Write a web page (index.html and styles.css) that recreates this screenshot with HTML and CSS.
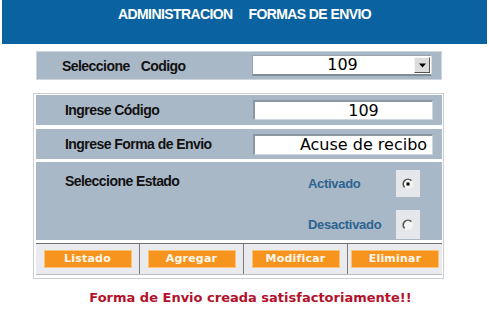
FILE: index.html
```html
<!DOCTYPE html>
<html lang="es">
<head>
<meta charset="utf-8">
<title>Administracion Formas de Envio</title>
<link rel="stylesheet" href="styles.css">
</head>
<body>
<header class="title">
  <span>ADMINISTRACION</span>
  <span>FORMAS DE ENVIO</span>
</header>

<section class="pick">
  <div class="lbl pick-lbl"><span>Seleccione</span><span>Codigo</span></div>
  <div class="select">
    <span class="select-val">109</span>
    <span class="select-btn">
      <svg width="9" height="5" viewBox="0 0 9 5"><path d="M1 0.5h7L4.5 4.5z" fill="#000"/></svg>
    </span>
  </div>
</section>

<section class="form">
  <div class="row">
    <div class="lbl row-lbl">Ingrese Código</div>
    <div class="input">109</div>
  </div>
  <div class="row row-2">
    <div class="lbl row-lbl">Ingrese Forma de Envio</div>
    <div class="input input-2">Acuse de recibo</div>
  </div>
  <div class="row row-estado">
    <div class="lbl estado-lbl">Seleccione Estado</div>
    <div class="radios">
      <span class="opt">Activado</span>
      <span class="radio-box">
        <svg width="12" height="12" viewBox="0 0 12 12"><circle cx="6" cy="6" r="5" fill="#f4f4f4"/><path d="M2.6 9.4A4.8 4.8 0 0 1 9.4 2.6" fill="none" stroke="#555" stroke-width="1.6"/><rect x="4.5" y="4.5" width="3" height="3" fill="#000"/></svg>
      </span>
      <span class="opt">Desactivado</span>
      <span class="radio-box">
        <svg width="12" height="12" viewBox="0 0 12 12"><circle cx="6" cy="6" r="5" fill="#f4f4f4"/><path d="M2.6 9.4A4.8 4.8 0 0 1 9.4 2.6" fill="none" stroke="#555" stroke-width="1.6"/></svg>
      </span>
    </div>
  </div>
  <div class="buttons">
    <div class="cell"><span class="btn">Listado</span></div>
    <div class="cell"><span class="btn">Agregar</span></div>
    <div class="cell"><span class="btn">Modificar</span></div>
    <div class="cell"><span class="btn">Eliminar</span></div>
  </div>
</section>

<p class="msg">Forma de Envio creada satisfactoriamente!!</p>
</body>
</html>
```
FILE: styles.css
```css
body {
  margin: 0;
  width: 489px;
  background: #ffffff;
  font-family: "Liberation Sans", Arial, sans-serif;
}

.title {
  margin: 0 2px;
  height: 44px;
  box-sizing: border-box;
  padding-top: 6px;
  background: #0a63a0;
  color: #ffffff;
  font-weight: bold;
  font-size: 14px;
  line-height: 16px;
  letter-spacing: -0.6px;
  display: flex;
  justify-content: center;
  gap: 16px;
}

.lbl {
  font-weight: bold;
  font-size: 14px;
  letter-spacing: -0.55px;
  color: #111;
  line-height: 16px;
}

.pick {
  margin: 7px 0 0 36px;
  width: 406px;
  height: 29px;
  box-sizing: border-box;
  background: #a9b8c7;
  border: 1px solid #cfd6dd;
  display: flex;
  align-items: center;
}

.pick-lbl {
  width: 215px;
  box-sizing: border-box;
  padding-left: 25px;
  display: flex;
  gap: 11px;
}

.select {
  width: 180px;
  height: 21px;
  box-sizing: border-box;
  background: #fff;
  border-top: 1px solid #9aa4ae;
  border-left: 1px solid #9aa4ae;
  border-right: 1px solid #d9dee3;
  border-bottom: 2px solid #7f8b97;
  display: flex;
  align-items: center;
}

.select-val {
  flex: 1;
  text-align: center;
  padding-left: 18px;
  font-family: "DejaVu Sans", sans-serif;
  font-size: 16px;
  line-height: 18px;
  color: #000;
}

.select-btn {
  width: 16px;
  height: 16px;
  box-sizing: border-box;
  margin-right: 1px;
  background: #dcdcdc;
  border-top: 1px solid #f4f4f4;
  border-left: 1px solid #f4f4f4;
  border-right: 1px solid #555;
  border-bottom: 1px solid #555;
  display: flex;
  align-items: center;
  justify-content: center;
}

.form {
  margin: 13px 0 0 33px;
  width: 411px;
  box-sizing: border-box;
  border: 1px solid #cbcfd4;
  padding: 1px 1px 3px 2px;
  display: flex;
  flex-direction: column;
}

.row {
  height: 30px;
  background: #a9b8c7;
  display: flex;
  align-items: center;
}

.row-2 {
  margin-top: 4px;
}

.row-lbl {
  width: 217px;
  box-sizing: border-box;
  padding-left: 29px;
}

.input {
  width: 180px;
  height: 20px;
  box-sizing: border-box;
  background: #fff;
  border-top: 2px solid #8a97a3;
  border-left: 2px solid #8a97a3;
  border-right: 1px solid #cfd6dd;
  border-bottom: 1px solid #cfd6dd;
  padding-left: 40px;
  text-align: center;
  font-family: "DejaVu Sans", sans-serif;
  font-size: 16px;
  line-height: 17px;
  color: #000;
}

.input-2 {
  height: 21px;
  line-height: 18px;
}

.row-estado {
  margin-top: 3px;
  height: 78px;
  align-items: flex-start;
}

.estado-lbl {
  width: 272px;
  box-sizing: border-box;
  padding: 11px 0 0 29px;
}

.radios {
  padding-top: 8px;
  display: grid;
  grid-template-columns: 88px 24px;
  grid-template-rows: 27px 29px;
  row-gap: 13px;
  align-items: center;
}

.opt {
  font-weight: bold;
  font-size: 13px;
  letter-spacing: -0.3px;
  color: #2d6390;
}

.radio-box {
  height: 100%;
  background: #e5e7ea;
  display: flex;
  align-items: center;
  justify-content: center;
}

.buttons {
  margin-top: 3px;
  height: 30px;
  background: #e9ebee;
  border-top: 1px solid #6f6f6f;
  border-bottom: 1px solid #b9bcc0;
  display: grid;
  grid-template-columns: 103px 104px 104px 95px;
}

.cell {
  display: flex;
  align-items: center;
  justify-content: center;
  border-left: 1px solid #7b7b7b;
}

.cell:first-child {
  border-left: none;
}

.btn {
  width: 88px;
  height: 18px;
  box-sizing: border-box;
  background: #f7941d;
  border: 1px solid #fbc27c;
  color: #fff8ee;
  font-family: "DejaVu Sans", sans-serif;
  font-weight: bold;
  font-size: 11px;
  line-height: 16px;
  text-align: center;
  letter-spacing: 0.2px;
}

.msg {
  margin: 11px 0 0;
  padding-left: 12px;
  text-align: center;
  font-family: "DejaVu Sans", sans-serif;
  font-weight: bold;
  font-size: 13px;
  line-height: 15px;
  color: #b3122c;
}
```
